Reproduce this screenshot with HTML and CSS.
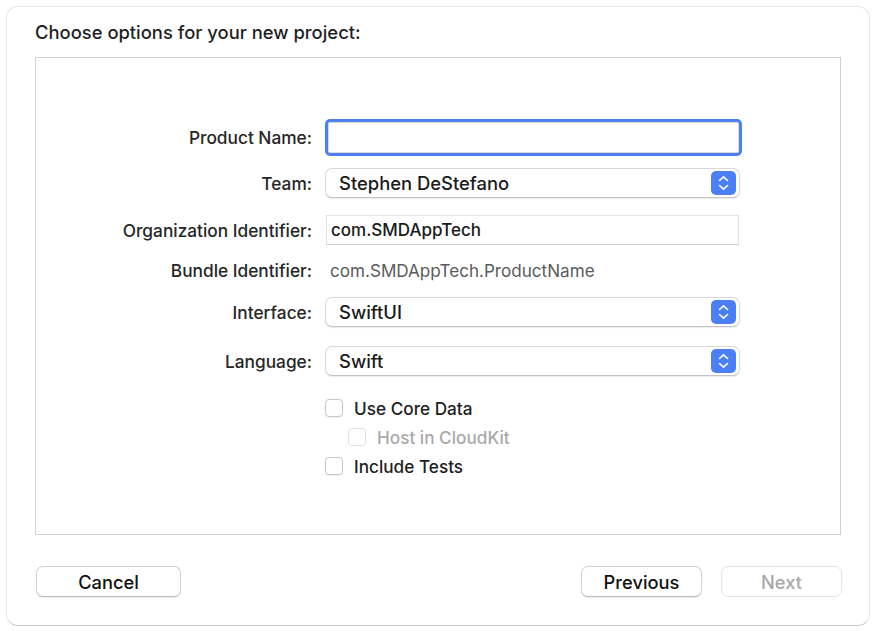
FILE: index.html
```html
<!DOCTYPE html>
<html>
<head>
<meta charset="utf-8">
<link rel="stylesheet" href="styles.css">
</head>
<body>
<div class="window">
  <div class="title">Choose options for your new project:</div>
  <div class="panel">
    <div class="form">
      <div class="row row-name">
        <div class="label">Product Name:</div>
        <div class="field focus"></div>
      </div>
      <div class="row row-team">
        <div class="label">Team:</div>
        <div class="popup"><span class="val">Stephen DeStefano</span>
          <svg class="stepper" width="25" height="24" viewBox="0 0 25 24"><rect x="0" y="0" width="25" height="24" rx="5" fill="#4b80f4"/><path d="M8.5 9.5 L12.5 5.8 L16.5 9.5" fill="none" stroke="#fff" stroke-width="1.6" stroke-linecap="round" stroke-linejoin="round"/><path d="M8.5 14.5 L12.5 18.2 L16.5 14.5" fill="none" stroke="#fff" stroke-width="1.6" stroke-linecap="round" stroke-linejoin="round"/></svg>
        </div>
      </div>
      <div class="row row-org">
        <div class="label">Organization Identifier:</div>
        <div class="field plain"><span class="fval">com.SMDAppTech</span></div>
      </div>
      <div class="row row-bundle">
        <div class="label">Bundle Identifier:</div>
        <div class="static">com.SMDAppTech.ProductName</div>
      </div>
      <div class="row row-iface">
        <div class="label">Interface:</div>
        <div class="popup"><span class="val">SwiftUI</span>
          <svg class="stepper" width="25" height="24" viewBox="0 0 25 24"><rect x="0" y="0" width="25" height="24" rx="5" fill="#4b80f4"/><path d="M8.5 9.5 L12.5 5.8 L16.5 9.5" fill="none" stroke="#fff" stroke-width="1.6" stroke-linecap="round" stroke-linejoin="round"/><path d="M8.5 14.5 L12.5 18.2 L16.5 14.5" fill="none" stroke="#fff" stroke-width="1.6" stroke-linecap="round" stroke-linejoin="round"/></svg>
        </div>
      </div>
      <div class="row row-lang">
        <div class="label">Language:</div>
        <div class="popup"><span class="val">Swift</span>
          <svg class="stepper" width="25" height="24" viewBox="0 0 25 24"><rect x="0" y="0" width="25" height="24" rx="5" fill="#4b80f4"/><path d="M8.5 9.5 L12.5 5.8 L16.5 9.5" fill="none" stroke="#fff" stroke-width="1.6" stroke-linecap="round" stroke-linejoin="round"/><path d="M8.5 14.5 L12.5 18.2 L16.5 14.5" fill="none" stroke="#fff" stroke-width="1.6" stroke-linecap="round" stroke-linejoin="round"/></svg>
        </div>
      </div>
      <div class="check check-core"><span class="box"></span><span class="ctext">Use Core Data</span></div>
      <div class="check check-host disabled"><span class="box"></span><span class="ctext">Host in CloudKit</span></div>
      <div class="check check-tests"><span class="box"></span><span class="ctext">Include Tests</span></div>
    </div>
  </div>
  <div class="footer">
    <div class="btn btn-cancel">Cancel</div>
    <div class="spacer"></div>
    <div class="btn btn-prev">Previous</div>
    <div class="btn btn-next disabled">Next</div>
  </div>
</div>
</body>
</html>
```
FILE: styles.css
```css
* { box-sizing: border-box; }
html, body { margin: 0; padding: 0; background: #fff; }
body { font-family: Inter, "Liberation Sans", sans-serif; color: #1e1e1e; }

.window {
  margin: 6px 0 0 6px;
  width: 864px;
  height: 620px;
  border: 1px solid #e6e6e6;
  border-bottom-color: #c9c9c9;
  border-radius: 12px;
  padding: 0 28px;
  display: flex;
  flex-direction: column;
}

.title {
  margin-top: 14px;
  height: 22px;
  line-height: 22px;
  font-size: 18.4px;
  font-weight: 500;
  color: #1f1f1f;
}

.panel {
  margin-top: 14px;
  height: 478px;
  border: 1px solid #d4d4d4;
  border-right-color: #cfcfcf;
  background: #fff;
  padding-top: 61px;
}

.form { display: flex; flex-direction: column; }

.row { display: flex; align-items: center; }
.label {
  width: 289px;
  padding-right: 13px;
  text-align: right;
  font-size: 17.3px;
  font-weight: 500;
  color: #262626;
  white-space: nowrap;
}
.val { font-size: 18.4px; font-weight: 500; color: #1a1a1a; }
.fval { font-size: 17px; font-weight: 500; color: #1a1a1a; }

.field {
  width: 417px;
  height: 37px;
  background: #fff;
}
.field.focus {
  border: 3px solid #4c80f2;
  border-radius: 5px;
  box-shadow: inset 0 0 0 1px #dcdcdc;
}
.field.plain {
  width: 413px;
  height: 30px;
  margin-left: 1px;
  border: 1px solid #e2e2e2;
  border-bottom-color: #cdcdcd;
  display: flex;
  align-items: center;
  padding-left: 4px;
}

.popup {
  width: 415px;
  height: 30px;
  border: 1px solid #d8d8d8;
  border-bottom-color: #c4c4c4;
  border-radius: 7px;
  box-shadow: 0 1px 1px rgba(0,0,0,0.08);
  display: flex;
  align-items: center;
  justify-content: space-between;
  padding: 0 3px 0 13px;
  background: #fff;
}
.stepper { display: block; }

.row-team { margin-top: 12px; }
.row-org { margin-top: 17px; }
.row-bundle { margin-top: 13px; height: 24px; }
.row-iface { margin-top: 15px; }
.row-lang { margin-top: 19px; }

.static { font-size: 17.1px; color: #5b5b5b; padding-left: 5px; white-space: nowrap; }

.check {
  display: flex;
  align-items: center;
  height: 20px;
  padding-left: 289px;
}
.check-core { margin-top: 22px; }
.check-host { margin-top: 9px; padding-left: 312px; }
.check-tests { margin-top: 9px; }
.box {
  width: 18px;
  height: 18px;
  border: 1px solid #c6c6c6;
  border-radius: 4px;
  background: #fff;
  box-shadow: 0 1px 1px rgba(0,0,0,0.06);
  margin-right: 11px;
}
.ctext { font-size: 17.2px; font-weight: 500; color: #1e1e1e; }
.check.disabled .box { border-color: #e0e0e0; box-shadow: none; }
.check.disabled .ctext { color: #a9a9a9; }

.footer {
  margin-top: 31px;
  display: flex;
  align-items: center;
}
.spacer { flex: 1; }
.btn {
  height: 31px;
  border: 1px solid #d2d2d2;
  border-bottom-color: #bdbdbd;
  border-radius: 7px;
  box-shadow: 0 1px 1px rgba(0,0,0,0.08);
  display: flex;
  align-items: center;
  justify-content: center;
  font-size: 18.3px;
  font-weight: 500;
  color: #111;
  background: #fff;
}
.btn-cancel { width: 145px; margin-left: 1px; }
.btn-prev { width: 121px; }
.btn-next { width: 121px; margin-left: 19px; margin-right: -1px; }
.btn.disabled { color: #a8a8a8; border-color: #e3e3e3; box-shadow: none; }
```
